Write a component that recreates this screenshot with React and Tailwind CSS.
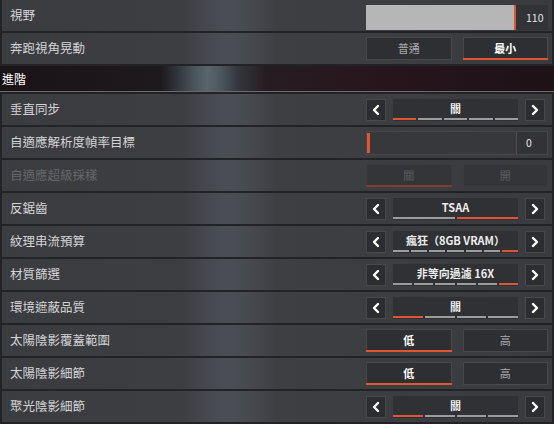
import React from 'react';
import { ChevronLeft, ChevronRight } from 'lucide-react';

const ORANGE = 'bg-[#e0552f]';

const Row = ({ label, disabled, first, children }) => (
  <div
    className={`ml-[2px] mr-[2px] ${first ? 'h-[31px]' : 'h-[31px] mt-[2px]'} flex items-center justify-between pl-[8px] pr-[4px] bg-[linear-gradient(90deg,#3b3c40_0%,#3d3e42_33%,#45484d_37%,#4b4f55_41%,#484b50_44%,#3e3f43_50%,#3a3b3e_100%)]`}
  >
    <span className={`text-[12.5px] ${disabled ? 'text-[#66676b]' : 'text-[#d4d4d6]'}`}>{label}</span>
    <div className="w-[182px] h-full flex items-center">{children}</div>
  </div>
);

const Selector = ({ value, segments, active }) => (
  <div className="w-full flex items-center gap-[7px] pr-[3px]">
    <div className="w-[20px] h-[22px] bg-[#2c2d30] border border-[#47484c] flex items-center justify-center text-white">
      <ChevronLeft size={16} strokeWidth={3.6} />
    </div>
    <div className="flex-1 h-[22px] bg-[#303134] relative flex items-center justify-center">
      <span className="text-[11px] font-bold text-[#ececec] -mt-[2px]">{value}</span>
      <div className="absolute left-0 right-0 bottom-[1px] flex gap-[2px]">
        {Array.from({ length: segments }).map((_, i) => (
          <div key={i} className={`flex-1 h-[2px] ${i === active ? ORANGE : 'bg-[#9c9c9c]'}`} />
        ))}
      </div>
    </div>
    <div className="w-[20px] h-[22px] bg-[#2c2d30] border border-[#47484c] flex items-center justify-center text-white">
      <ChevronRight size={16} strokeWidth={3.6} />
    </div>
  </div>
);

const Toggle = ({ options, selected, disabled }) => (
  <div className="w-full flex gap-[11px]">
    {options.map((o, i) => (
      <div
        key={o}
        className={`flex-1 h-[23px] relative flex items-center justify-center border ${
          disabled ? 'bg-[#343539] border-[#3a3b3f]' : 'bg-[#2e2f32] border-[#47484c]'
        }`}
      >
        <span
          className={`text-[11px] ${
            disabled ? 'text-[#5d5e62]' : i === selected ? 'text-white font-bold' : 'text-[#a9aaad]'
          }`}
        >
          {o}
        </span>
        {i === selected && (
          <div
            className={`absolute -left-px -right-px -bottom-px h-[2px] ${disabled ? 'bg-[#7c3f2c]' : ORANGE}`}
          />
        )}
      </div>
    ))}
  </div>
);

export default function App() {
  return (
    <div className="w-[554px] h-[424px] overflow-hidden bg-[#222326] font-['Noto_Sans_CJK_TC','Noto_Sans',sans-serif]">
      <Row label="視野" first>
        <div className="w-full h-[25px] self-start mt-[5px] flex">
          <div className="flex-1 bg-[#b6b6b6]" />
          <div className={`w-[2px] ${ORANGE}`} />
          <div className="w-[32px] bg-[#323337] flex items-center pl-[10px] text-[10.5px] text-[#e6e6e6]">110</div>
        </div>
      </Row>
      <Row label="奔跑視角晃動">
        <Toggle options={['普通', '最小']} selected={1} />
      </Row>

      <div className="mt-[2px] h-[26px] flex items-center pl-[2px] border-b border-[#6a6a6c] bg-[linear-gradient(90deg,#1a1317_0%,#1e191d_29%,#30363b_32%,#4a545b_35%,#5a646c_37.5%,#4b555c_40%,#33363a_43%,#261d22_48%,#28151b_70%,#22131a_85%,#1d1216_100%)]">
        <span className="text-[12px] text-white">進階</span>
      </div>

      <Row label="垂直同步">
        <Selector value="關" segments={5} active={0} />
      </Row>
      <Row label="自適應解析度幀率目標">
        <div className="w-full h-[24px] flex border border-[#47484c] bg-[#37383c]">
          <div className="flex-1 relative">
            <div className={`absolute left-0 top-[1px] bottom-[1px] w-[3px] ${ORANGE}`} />
          </div>
          <div className="w-[31px] border-l border-[#4c4d51] bg-[#323337] flex items-center pl-[9px] text-[10.5px] text-[#e6e6e6]">0</div>
        </div>
      </Row>
      <Row label="自適應超級採樣" disabled>
        <Toggle options={['關', '開']} selected={0} disabled />
      </Row>
      <Row label="反鋸齒">
        <Selector value="TSAA" segments={2} active={1} />
      </Row>
      <Row label="紋理串流預算">
        <Selector value="瘋狂（8GB VRAM）" segments={7} active={6} />
      </Row>
      <Row label="材質篩選">
        <Selector value="非等向過濾 16X" segments={6} active={5} />
      </Row>
      <Row label="環境遮蔽品質">
        <Selector value="關" segments={4} active={0} />
      </Row>
      <Row label="太陽陰影覆蓋範圍">
        <Toggle options={['低', '高']} selected={0} />
      </Row>
      <Row label="太陽陰影細節">
        <Toggle options={['低', '高']} selected={0} />
      </Row>
      <Row label="聚光陰影細節">
        <Selector value="關" segments={4} active={0} />
      </Row>
    </div>
  );
}
